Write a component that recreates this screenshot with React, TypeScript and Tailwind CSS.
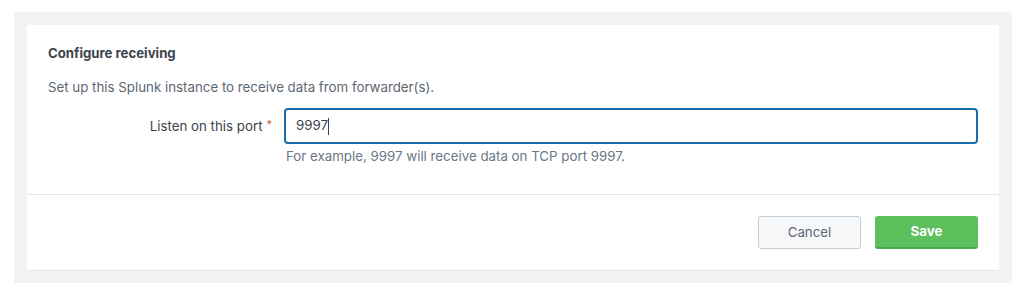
import React from 'react';

export default function App() {
  return (
    <div className="h-[294px] bg-white pt-[12px] pl-[14px] pr-[12px] font-['Inter',sans-serif]">
      <div className="bg-[#f2f3f5] pt-[13px] px-[13px] pb-[12px]">
        <div className="bg-white border-b border-[#e4e7eb]">
          <div className="px-[21px] pt-[19px] pb-[29px]">
            <h2 className="text-[13.2px] leading-[18px] font-bold text-[#3c444d]">Configure receiving</h2>
            <p className="mt-[16px] text-[13.3px] leading-[18px] text-[#5c6773]">
              Set up this Splunk instance to receive data from forwarder(s).
            </p>
            <div className="mt-[12px] flex items-start">
              <label className="w-[236px] shrink-0 pr-[12px] text-right text-[13.3px] leading-[36px] text-[#3c444d]">
                Listen on this port
                <span className="ml-[4px] text-[11px] align-top leading-[32px] text-[#d6563c]">*</span>
              </label>
              <div className="flex-1">
                <div className="h-[36px] rounded-[4px] border-2 border-[#1a6dab] pl-[10px] flex items-center text-[13.3px] text-[#3c444d]">
                  <span>9997</span>
                  <span className="h-[17px] w-px bg-[#3c444d]" />
                </div>
                <p className="mt-[4px] text-[13.3px] leading-[17px] text-[#6b7785] pl-[2px]">
                  For example, 9997 will receive data on TCP port 9997.
                </p>
              </div>
            </div>
          </div>
          <div className="border-t border-[#e4e7eb] flex justify-end gap-[14px] px-[21px] pt-[21px] pb-[21px]">
            <button className="w-[103px] h-[33px] rounded-[3px] border border-[#c3cbd4] bg-[#f7f8fa] text-[13.3px] text-[#5c6773]">
              Cancel
            </button>
            <button className="w-[103px] h-[33px] rounded-[3px] bg-[#5cc05c] border-b-2 border-[#4aa94a] text-[13.3px] font-bold text-white">
              Save
            </button>
          </div>
        </div>
      </div>
    </div>
  );
}
